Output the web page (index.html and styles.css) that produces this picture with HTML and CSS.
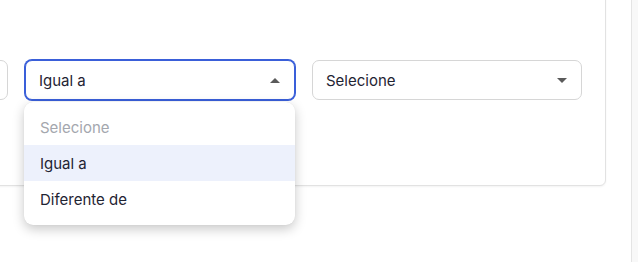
FILE: index.html
```html
<!DOCTYPE html>
<html lang="pt">
<head>
<meta charset="utf-8">
<title>Filtro</title>
<link rel="stylesheet" href="styles.css">
</head>
<body>
<div class="page">
  <main class="main">
    <section class="card">
      <div class="row">
        <div class="select"></div>
        <div class="select-wrap">
          <div class="select is-open">
            <span class="value">Igual a</span>
            <span class="caret caret-up"></span>
          </div>
          <ul class="menu">
            <li class="option placeholder">Selecione</li>
            <li class="option active">Igual a</li>
            <li class="option">Diferente de</li>
          </ul>
        </div>
        <div class="select">
          <span class="value">Selecione</span>
          <span class="caret caret-down"></span>
        </div>
      </div>
    </section>
  </main>
  <aside class="scroll-strip"></aside>
</div>
</body>
</html>
```
FILE: styles.css
```css
* { box-sizing: border-box; }
html, body { margin: 0; padding: 0; }
body {
  background: #ffffff;
  font-family: Inter, "Noto Sans", sans-serif;
  font-size: 15px;
  color: #1f2433;
  width: 638px;
  height: 262px;
  overflow: hidden;
}
.page {
  display: flex;
  height: 262px;
}
.main {
  flex: 0 0 632px;
  border-right: 1px solid #e4e4e4;
  padding-top: 0;
}
.scroll-strip {
  flex: 1;
  background: #f8f8f8;
}
.card {
  margin-left: -40px;
  margin-top: -20px;
  width: 646px;
  height: 206px;
  border: 1px solid #e2e2e2;
  border-radius: 6px;
  background: #fff;
  box-shadow: 0 1px 2px rgba(0, 0, 0, 0.05);
  padding: 79px 23px 0 0;
}
.row {
  display: flex;
  justify-content: flex-end;
  gap: 17px;
}
.select-wrap {
  position: relative;
  width: 270px;
  flex: 0 0 270px;
}
.select {
  position: relative;
  flex: 0 0 270px;
  width: 270px;
  height: 40px;
  border: 1px solid #d6d6d6;
  border-radius: 7px;
  background: #fff;
  display: flex;
  align-items: center;
  justify-content: space-between;
  padding: 0 14px 0 13px;
}
.select.is-open {
  border-color: #3a5fd9;
  box-shadow: 0 0 0 1px #3a5fd9;
}
.value { line-height: 1; }
.caret {
  width: 0;
  height: 0;
  border-left: 5px solid transparent;
  border-right: 5px solid transparent;
}
.caret-up { border-bottom: 5px solid #5a5a5a; }
.caret-down { border-top: 5px solid #5a5a5a; }
.menu {
  position: absolute;
  top: 42px;
  left: -1px;
  width: 271px;
  margin: 0;
  padding: 7px 0 8px;
  list-style: none;
  background: #fff;
  border-radius: 9px;
  box-shadow: 0 4px 12px rgba(0, 0, 0, 0.22), 0 0 1px rgba(0, 0, 0, 0.1);
  z-index: 2;
}
.option {
  height: 36px;
  display: flex;
  align-items: center;
  padding-left: 16px;
}
.option.placeholder { color: #a4a7ae; }
.option.active { background: #edf1fc; }
```
